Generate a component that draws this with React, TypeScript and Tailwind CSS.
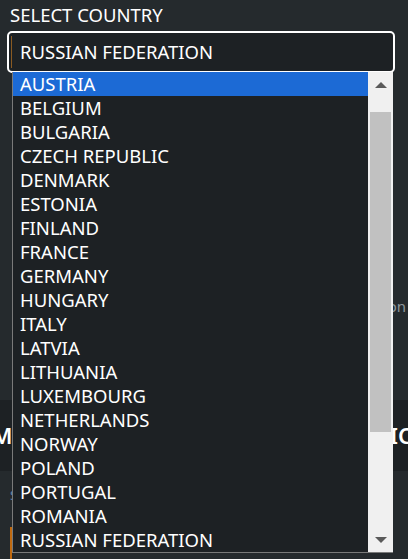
const countries = [
  'AUSTRIA',
  'BELGIUM',
  'BULGARIA',
  'CZECH REPUBLIC',
  'DENMARK',
  'ESTONIA',
  'FINLAND',
  'FRANCE',
  'GERMANY',
  'HUNGARY',
  'ITALY',
  'LATVIA',
  'LITHUANIA',
  'LUXEMBOURG',
  'NETHERLANDS',
  'NORWAY',
  'POLAND',
  'PORTUGAL',
  'ROMANIA',
  'RUSSIAN FEDERATION',
];

export default function App() {
  return (
    <div
      className="relative h-[559px] w-[408px] overflow-hidden bg-[#252a2d] text-white"
      style={{ fontFamily: '"Noto Sans", "Open Sans", sans-serif' }}
    >
      <div className="px-[7px] pt-[2px]">
        <label className="block pl-[3px] text-[18.5px] leading-[26px]">SELECT COUNTRY</label>
        <div className="mt-[3px] flex h-[42px] w-[388px] items-center rounded-[5px] border-2 border-white bg-[#1d2124] pl-[2px] text-[18.5px]">
          <span className="mr-[8px] h-[32px] w-px bg-[#8a5a22]" />
          RUSSIAN FEDERATION
        </div>
      </div>

      {/* page content under the open list */}
      <div className="flex flex-col">
        <div className="flex h-[327px] flex-col pl-[10px] pr-[2px] text-[15px] text-[#8f979c]">
          <p className="mt-[222px] text-right">on</p>
        </div>
        <div className="flex h-[71px] items-center justify-between bg-[#1d2124] text-[22px] font-semibold">
          <span className="-ml-[8px]">M</span>
          <span className="-mr-[4px]">IC</span>
        </div>
        <div className="mt-[16px] pl-[10px] text-[13px] leading-[16px] text-[#5f86ad]">S</div>
        <div className="mt-[24px] ml-[10px] h-[40px] border-l-2 border-[#c06a10]" />
      </div>

      {/* open dropdown list */}
      <div className="absolute left-[12px] top-[72px] flex h-[481px] w-[381px] border-b border-l border-[#7a7a7a] bg-[#1d2124]">
        <ul className="flex-1 text-[18.5px]">
          {countries.map((c, i) => (
            <li
              key={c}
              className={
                i === 0
                  ? 'flex h-[24px] items-center bg-[#1c6ad5] pl-[7px]'
                  : 'flex h-[24px] items-center pl-[7px]'
              }
            >
              {c}
            </li>
          ))}
        </ul>
        <div className="flex w-[25px] flex-col bg-[#f0f0f0]">
          <div className="flex h-[24px] items-center justify-center">
            <svg width="12" height="7" viewBox="0 0 12 7">
              <path d="M0 7 L6 1 L12 7 Z" fill="#5a5a5a" />
            </svg>
          </div>
          <div className="mx-[2px] mt-[16px] h-[320px] bg-[#c1c1c1]" />
          <div className="flex-1" />
          <div className="flex h-[24px] items-center justify-center">
            <svg width="12" height="7" viewBox="0 0 12 7">
              <path d="M0 0 L6 6 L12 0 Z" fill="#5a5a5a" />
            </svg>
          </div>
        </div>
      </div>
    </div>
  );
}
